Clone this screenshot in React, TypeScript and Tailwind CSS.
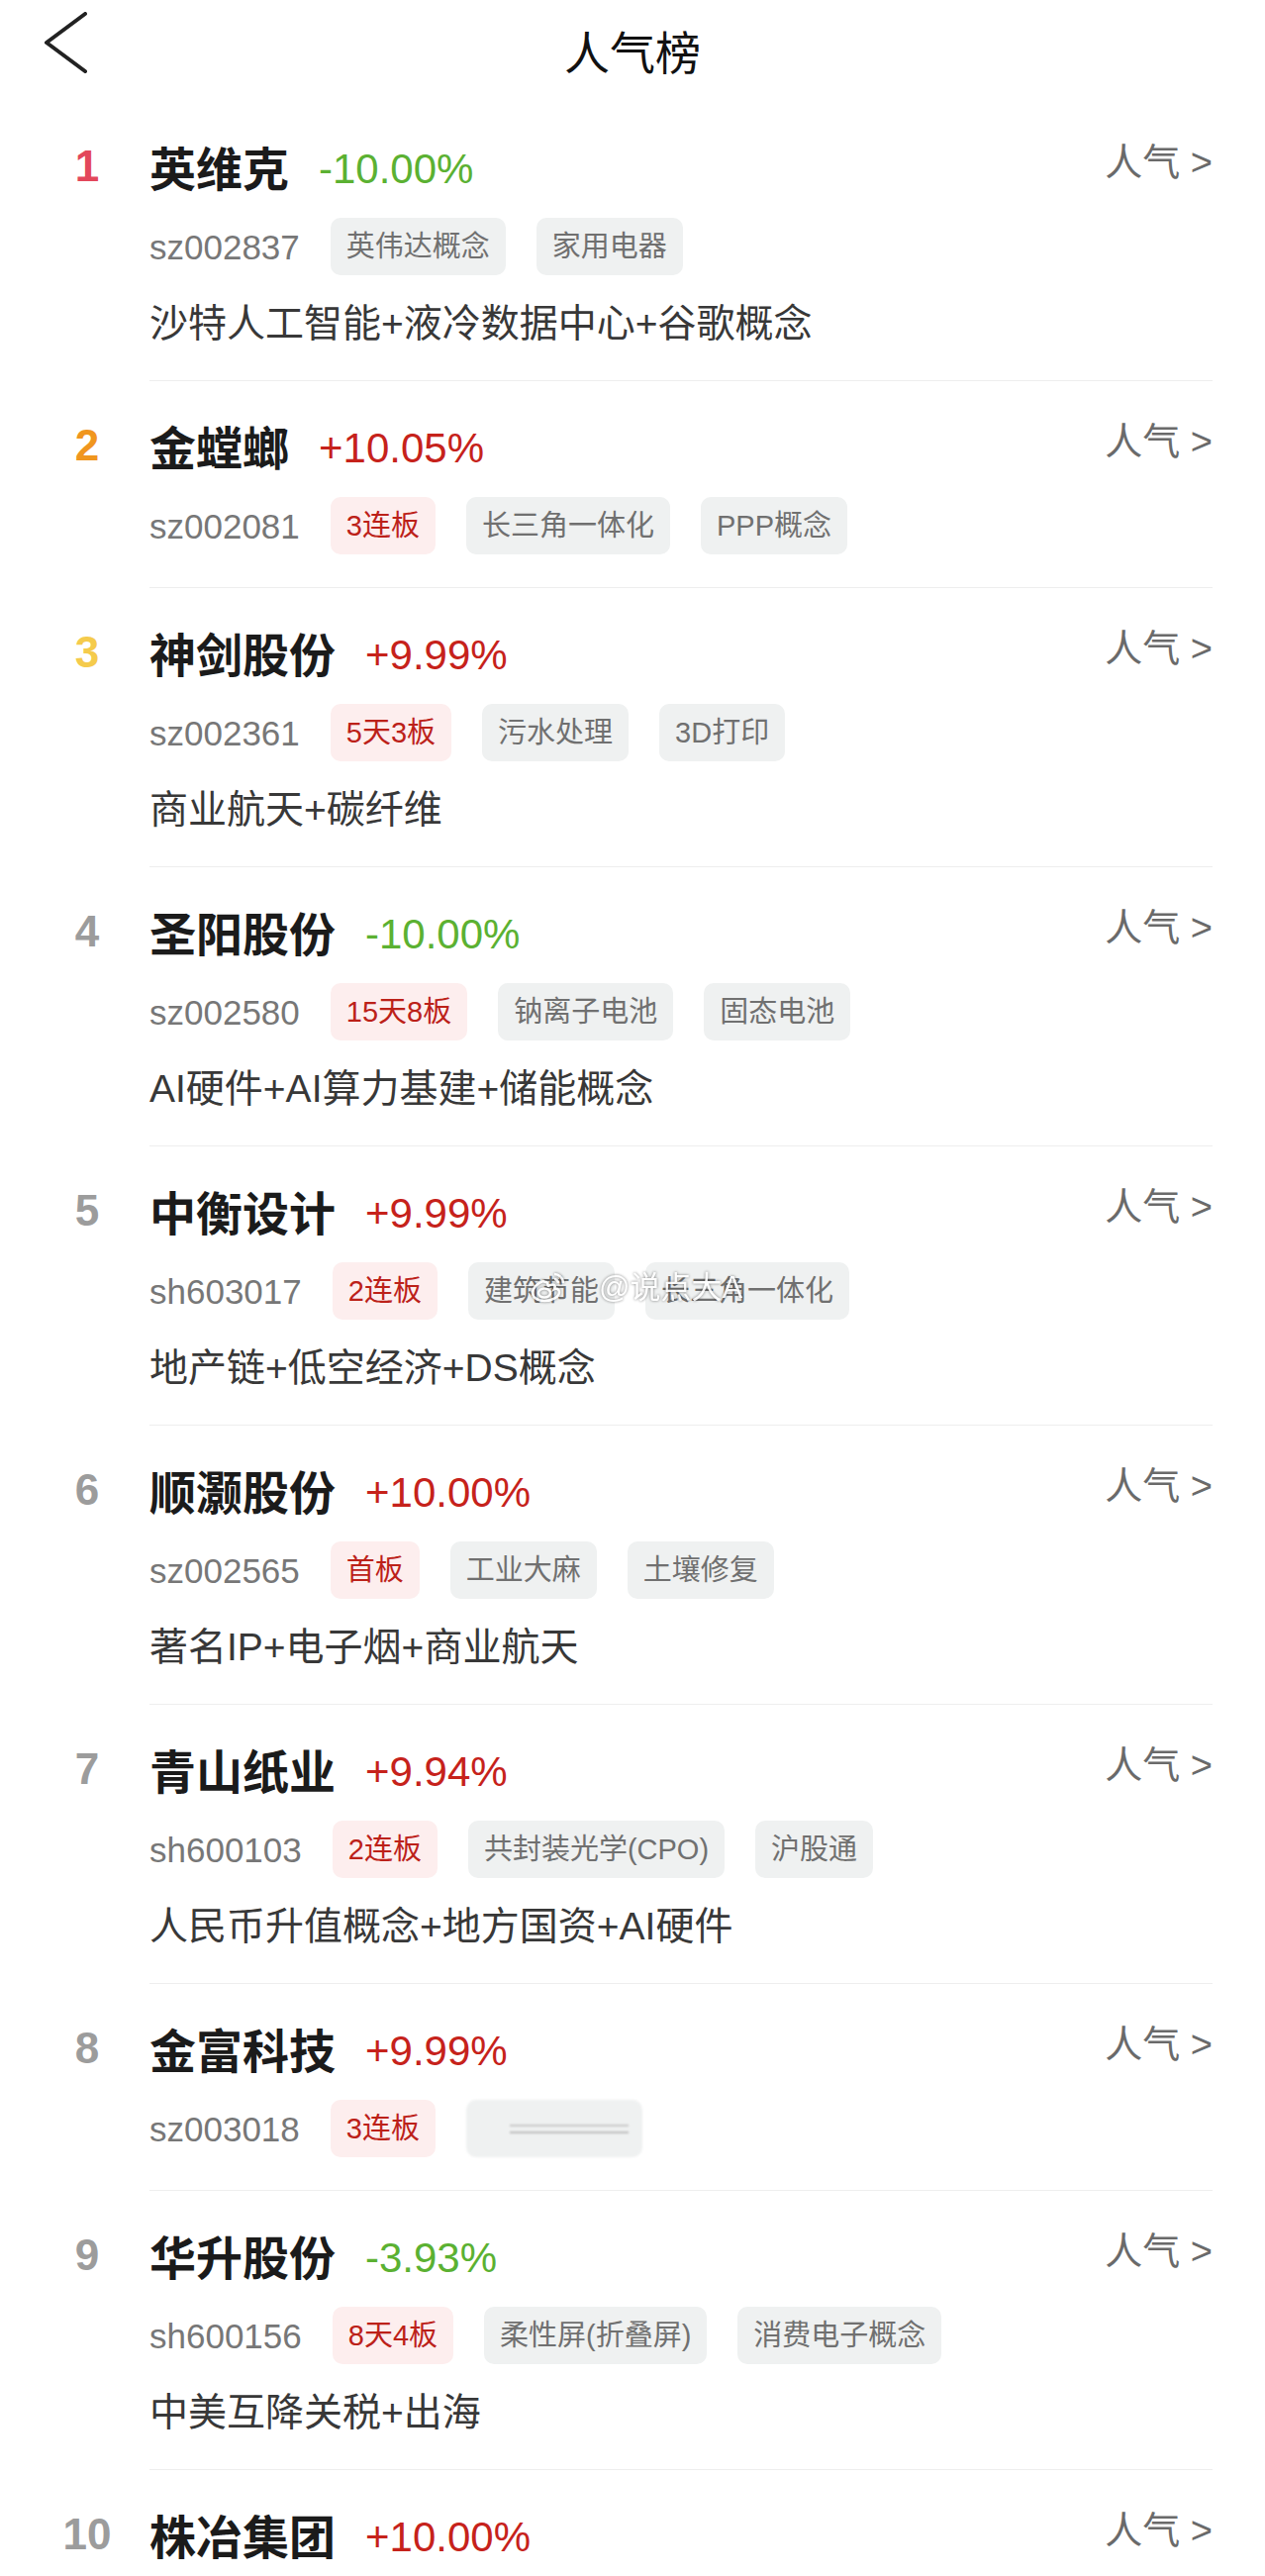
import React from "react";

type Stock = {
  rank: number;
  name: string;
  pct: string;
  code: string;
  hot?: string;
  tags: string[];
  desc?: string;
  blurTag?: boolean;
};

const stocks: Stock[] = [
  { rank: 1, name: "英维克", pct: "-10.00%", code: "sz002837", tags: ["英伟达概念", "家用电器"], desc: "沙特人工智能+液冷数据中心+谷歌概念" },
  { rank: 2, name: "金螳螂", pct: "+10.05%", code: "sz002081", hot: "3连板", tags: ["长三角一体化", "PPP概念"] },
  { rank: 3, name: "神剑股份", pct: "+9.99%", code: "sz002361", hot: "5天3板", tags: ["污水处理", "3D打印"], desc: "商业航天+碳纤维" },
  { rank: 4, name: "圣阳股份", pct: "-10.00%", code: "sz002580", hot: "15天8板", tags: ["钠离子电池", "固态电池"], desc: "AI硬件+AI算力基建+储能概念" },
  { rank: 5, name: "中衡设计", pct: "+9.99%", code: "sh603017", hot: "2连板", tags: ["建筑节能", "长三角一体化"], desc: "地产链+低空经济+DS概念" },
  { rank: 6, name: "顺灏股份", pct: "+10.00%", code: "sz002565", hot: "首板", tags: ["工业大麻", "土壤修复"], desc: "著名IP+电子烟+商业航天" },
  { rank: 7, name: "青山纸业", pct: "+9.94%", code: "sh600103", hot: "2连板", tags: ["共封装光学(CPO)", "沪股通"], desc: "人民币升值概念+地方国资+AI硬件" },
  { rank: 8, name: "金富科技", pct: "+9.99%", code: "sz003018", hot: "3连板", tags: [], blurTag: true },
  { rank: 9, name: "华升股份", pct: "-3.93%", code: "sh600156", hot: "8天4板", tags: ["柔性屏(折叠屏)", "消费电子概念"], desc: "中美互降关税+出海" },
  { rank: 10, name: "株冶集团", pct: "+10.00%", code: "", tags: [] },
];

const rankColors: Record<number, string> = {
  1: "text-[#e3475a]",
  2: "text-[#f0961f]",
  3: "text-[#f5cb4c]",
};

// weibo watermark sitting over row 5's tags
function Watermark() {
  return (
    <div className="pointer-events-none absolute left-[384px] top-[5px] flex h-[40px] items-center opacity-90 drop-shadow-[0_0_1.5px_rgba(0,0,0,0.55)]">
      <svg width="38" height="32" viewBox="0 0 38 32" fill="none" stroke="#ffffff" strokeWidth="2.6">
        <path d="M14 10c-6 2-11 7-11 12 0 5 6 8 12 8 8 0 15-4 15-9 0-3-3-4-5-3 2-4-1-6-6-3-1 0 0-3-2-4-1 0-2 0-3-1z" />
        <ellipse cx="15" cy="22" rx="6" ry="4.5" />
        <path d="M25 3c5 0 9 4 9 9M25 8c2 0 4 2 4 4" />
      </svg>
      <span className="ml-[32px] text-[31px] leading-none text-white">@说点大A</span>
    </div>
  );
}

function Row({ s }: { s: Stock }) {
  const up = s.pct.startsWith("+");
  return (
    <div className="flex pl-[33px]">
      <div
        className={`w-[110px] shrink-0 pt-[35px] text-center font-['Liberation_Sans',sans-serif] text-[44px] font-bold leading-[60px] ${
          rankColors[s.rank] ?? "text-[#9c9c9c]"
        }`}
      >
        {s.rank}
      </div>
      <div className={`ml-[8px] mr-[53px] flex-1 border-b border-[#eeeeee] pt-[35px] ${s.desc ? "pb-[34px]" : "pb-[33px]"}`}>
        {/* name line */}
        <div className="flex h-[60px] items-center justify-between">
          <div className="flex items-center">
            <span className="font-['Noto_Sans_CJK_SC',sans-serif] text-[47px] font-bold leading-[60px] text-[#1b1b1b]">
              {s.name}
            </span>
            <span
              className={`ml-[30px] pt-[6px] text-[42px] leading-[60px] ${
                up ? "text-[#c6221b]" : "text-[#5bb132]"
              }`}
            >
              {s.pct}
            </span>
          </div>
          <span className="mb-[8px] text-[38px] leading-[40px] text-[#6a6a6a]">人气 &gt;</span>
        </div>

        {/* code + tags */}
        {s.code && (
          <div className="relative mt-[22px] flex h-[58px] items-center gap-[31px]">
            <span className="text-[35px] leading-none text-[#777777]">{s.code}</span>
            {s.hot && (
              <span className="flex h-[58px] items-center rounded-[10px] bg-[#fdeeee] px-[16px] text-[29px] leading-none text-[#bc2119]">
                {s.hot}
              </span>
            )}
            {s.tags.map((t) => (
              <span
                key={t}
                className="flex h-[58px] items-center rounded-[10px] bg-[#eff1f1] px-[16px] text-[29px] leading-none text-[#707070]"
              >
                {t}
              </span>
            ))}
            {s.blurTag && (
              <span className="flex h-[58px] w-[178px] flex-col items-end justify-center gap-[5px] rounded-[10px] bg-[#eff1f1] pr-[14px] blur-[1px]">
                <span className="h-[2px] w-[120px] bg-[#c8c8c8]" />
                <span className="h-[2px] w-[120px] bg-[#bdbdbd]" />
              </span>
            )}
            {s.rank === 5 && <Watermark />}
          </div>
        )}

        {/* description */}
        {s.desc && (
          <div className="mt-[26px] h-[46px] text-[39px] leading-[46px] text-[#383838]">{s.desc}</div>
        )}
      </div>
    </div>
  );
}

export default function App() {
  return (
    <div className="h-[2602px] w-[1278px] overflow-hidden bg-white font-['Liberation_Sans','Noto_Sans_CJK_SC',sans-serif]">
      {/* header */}
      <div className="grid h-[103px] grid-cols-[1fr_auto_1fr] items-center pb-[4px]">
        <div className="self-start pl-[43px] pt-[12px]">
          <svg width="50" height="62" viewBox="0 0 50 62" fill="none">
            <path d="M43 2L4 31L43 60" stroke="#222222" strokeWidth="4" strokeLinecap="round" strokeLinejoin="round" />
          </svg>
        </div>
        <div className="font-['Noto_Sans_CJK_SC',sans-serif] text-[46px] font-normal leading-none text-[#111111]">人气榜</div>
        <div />
      </div>

      {stocks.map((s) => (
        <Row key={s.rank} s={s} />
      ))}
    </div>
  );
}
